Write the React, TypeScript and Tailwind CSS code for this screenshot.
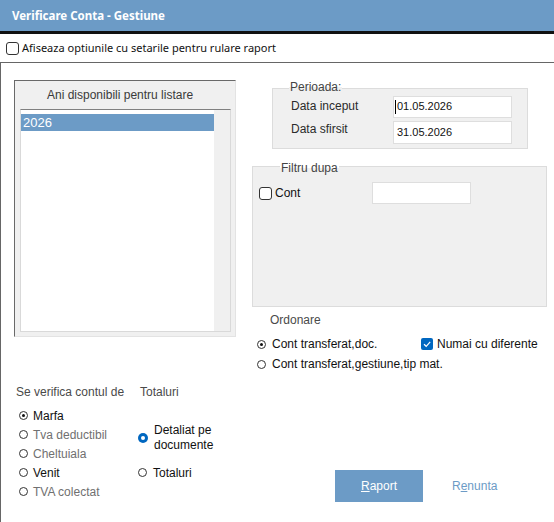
import React from "react";

const Radio = ({ checked = false }: { checked?: boolean }) => (
  <span className="w-[9px] h-[9px] rounded-full border-[1.5px] border-[#333] bg-white flex items-center justify-center shrink-0">
    {checked && <span className="w-[3px] h-[3px] rounded-full bg-[#111]" />}
  </span>
);

const BlueRadio = () => (
  <span className="w-[10px] h-[10px] rounded-full bg-[#0067c0] flex items-center justify-center shrink-0">
    <span className="w-[4px] h-[4px] rounded-full bg-white" />
  </span>
);

const Check = () => (
  <span className="w-[13px] h-[13px] rounded-[3px] border border-[#333] bg-white shrink-0" />
);

const BlueCheck = () => (
  <span className="w-[12px] h-[12px] rounded-[2px] bg-[#0067c0] flex items-center justify-center shrink-0">
    <svg width="10" height="10" viewBox="0 0 10 10">
      <path d="M2 5.2 L4.2 7.3 L8.2 2.8" stroke="white" strokeWidth="1.2" fill="none" />
    </svg>
  </span>
);

const RadioRow = ({
  checked,
  label,
  gray,
}: {
  checked?: boolean;
  label: string;
  gray?: boolean;
}) => (
  <div className="h-[19px] flex items-center pl-[5px]">
    <Radio checked={checked} />
    <span className={`ml-[5px] text-[12px] leading-[14px] ${gray ? "text-[#707070]" : "text-[#111]"}`}>
      {label}
    </span>
  </div>
);

export default function App() {
  return (
    <div
      className="w-[554px] h-[522px] bg-white flex flex-col overflow-hidden"
      style={{ fontFamily: '"Liberation Sans", Arial, sans-serif' }}
    >
      {/* title bar */}
      <div className="h-[34px] shrink-0 bg-[#6c9bc6] border-b-[3px] border-[#111] flex items-center pl-[12px]">
        <span
          className="text-white text-[11.5px] font-bold leading-[14px]"
          style={{ fontFamily: '"Noto Sans", sans-serif' }}
        >
          Verificare Conta - Gestiune
        </span>
      </div>

      {/* options header */}
      <div className="h-[29px] shrink-0 border-b border-[#666] flex items-center pl-[6px]">
        <span className="w-[13px] h-[13px] rounded-[3px] border border-[#333] bg-white shrink-0" />
        <span
          className="ml-[3px] text-[11px] leading-[14px] text-[#111]"
          style={{ fontFamily: '"Noto Sans", sans-serif' }}
        >
          Afiseaza optiunile cu setarile pentru rulare raport
        </span>
      </div>

      {/* body */}
      <div className="flex-1 border-l border-[#666] flex">
        {/* left column */}
        <div className="w-[235px] shrink-0 pl-[13px] flex flex-col">
          <div className="mt-[17px] w-[222px] h-[257px] border-t border-l border-t-[#696969] border-l-[#696969] border-r border-b border-r-[#e3e3e3] border-b-[#e3e3e3] bg-[#f0f0f0] flex flex-col">
            <div className="h-[28px] shrink-0 flex items-center pl-[32px]">
              <span className="text-[12px] leading-[14px] text-[#3a3a3a]">
                Ani disponibili pentru listare
              </span>
            </div>
            <div className="ml-[5px] w-[211px] h-[223px] border-t border-t-[#808080] border-l border-r border-b border-l-[#d9d9d9] border-r-[#d9d9d9] border-b-[#d9d9d9] flex">
              <div className="w-[193px] bg-white flex flex-col">
                <div className="mt-[4px] h-[17px] bg-[#6c9bc6] text-white text-[13px] leading-[17px] pl-[2px]">
                  2026
                </div>
              </div>
              <div className="flex-1 bg-[#f0f0f0]" />
            </div>
          </div>

          {/* bottom-left options */}
          <div className="mt-[48px] grid grid-cols-[124px_auto]">
            <div className="flex flex-col">
              <div className="pl-[2px] text-[12px] leading-[14px] text-[#4a4a4a]">
                Se verifica contul de
              </div>
              <div className="mt-[7px] flex flex-col">
                <RadioRow checked label="Marfa" />
                <RadioRow gray label="Tva deductibil" />
                <RadioRow gray label="Cheltuiala" />
                <RadioRow label="Venit" />
                <RadioRow gray label="TVA colectat" />
              </div>
            </div>
            <div className="flex flex-col">
              <div className="pl-[2px] text-[12px] leading-[14px] text-[#4a4a4a]">Totaluri</div>
              <div className="mt-[24px] flex items-center">
                <BlueRadio />
                <span className="ml-[6px] text-[12px] leading-[15px] text-[#111]">
                  Detaliat pe
                  <br />
                  documente
                </span>
              </div>
              <div className="mt-[10px] h-[19px] flex items-center">
                <Radio />
                <span className="ml-[6px] text-[12px] leading-[14px] text-[#111]">Totaluri</span>
              </div>
            </div>
          </div>
        </div>

        {/* right column */}
        <div className="flex-1 flex flex-col">
          {/* Perioada */}
          <div className="relative mt-[25px] ml-[36px] w-[256px] h-[61px] border border-[#dcdcdc] bg-[#f0f0f0] pl-[18px] pt-[7px] flex flex-col">
            <span className="absolute left-[16px] top-[-9px] px-[1px] text-[12px] leading-[14px] text-[#444] bg-[linear-gradient(to_bottom,#ffffff_50%,#f0f0f0_50%)]">
              Perioada:
            </span>
            <div className="flex items-start h-[22px]">
              <span className="w-[102px] mt-[3px] text-[12px] leading-[14px] text-[#2b2b2b]">
                Data inceput
              </span>
              <div className="w-[119px] h-[22px] bg-white border border-[#dedede] flex items-start pt-[3px] pl-[1px]">
                <span className="w-[1px] h-[14px] bg-black mt-[0px]" />
                <span className="ml-[1px] text-[11px] leading-[13px] text-[#111]">01.05.2026</span>
              </div>
            </div>
            <div className="mt-[3px] flex items-start h-[23px]">
              <span className="w-[102px] mt-[1px] text-[12px] leading-[14px] text-[#2b2b2b]">Data sfirsit</span>
              <div className="w-[119px] h-[23px] bg-white border border-[#dedede] pt-[4px] pl-[3px]">
                <span className="block text-[11px] leading-[13px] text-[#111]">31.05.2026</span>
              </div>
            </div>
          </div>

          {/* Filtru dupa */}
          <div className="relative mt-[17px] ml-[16px] w-[295px] h-[141px] border border-[#dcdcdc] bg-[#f0f0f0] pt-[15px] pl-[6px]">
            <span className="absolute left-[27px] top-[-6px] px-[1px] text-[12px] leading-[14px] text-[#444] bg-[linear-gradient(to_bottom,#ffffff_50%,#f0f0f0_50%)]">
              Filtru dupa
            </span>
            <div className="flex items-center h-[22px]">
              <div className="w-[113px] flex items-center">
                <Check />
                <span className="ml-[3px] text-[12px] leading-[14px] text-[#111]">Cont</span>
              </div>
              <div className="w-[99px] h-[22px] bg-white border border-[#dedede]" />
            </div>
          </div>

          {/* Ordonare */}
          <div className="mt-[6px] ml-[34px] text-[12px] leading-[14px] text-[#4a4a4a]">Ordonare</div>
          <div className="mt-[7px] ml-[21px] flex flex-col">
            <div className="h-[20px] flex items-center">
              <div className="w-[164px] flex items-center">
                <Radio checked />
                <span className="ml-[6px] text-[12px] leading-[14px] text-[#111]">Cont transferat,doc.</span>
              </div>
              <BlueCheck />
              <span className="ml-[4px] text-[12px] leading-[14px] text-[#111]">Numai cu diferente</span>
            </div>
            <div className="h-[20px] flex items-center">
              <Radio />
              <span className="ml-[6px] text-[12px] leading-[14px] text-[#111]">
                Cont transferat,gestiune,tip mat.
              </span>
            </div>
          </div>

          {/* buttons */}
          <div className="mt-[96px] ml-[99px] flex items-center">
            <div className="w-[88px] h-[32px] bg-[#6c9bc6] flex items-center justify-center text-white text-[12px] leading-[14px]">
              <span>
                <span className="underline">R</span>aport
              </span>
            </div>
            <span className="ml-[29px] text-[12px] leading-[14px] text-[#6c9bc6]">
              R<span className="underline">e</span>nunta
            </span>
          </div>
        </div>
      </div>
    </div>
  );
}
